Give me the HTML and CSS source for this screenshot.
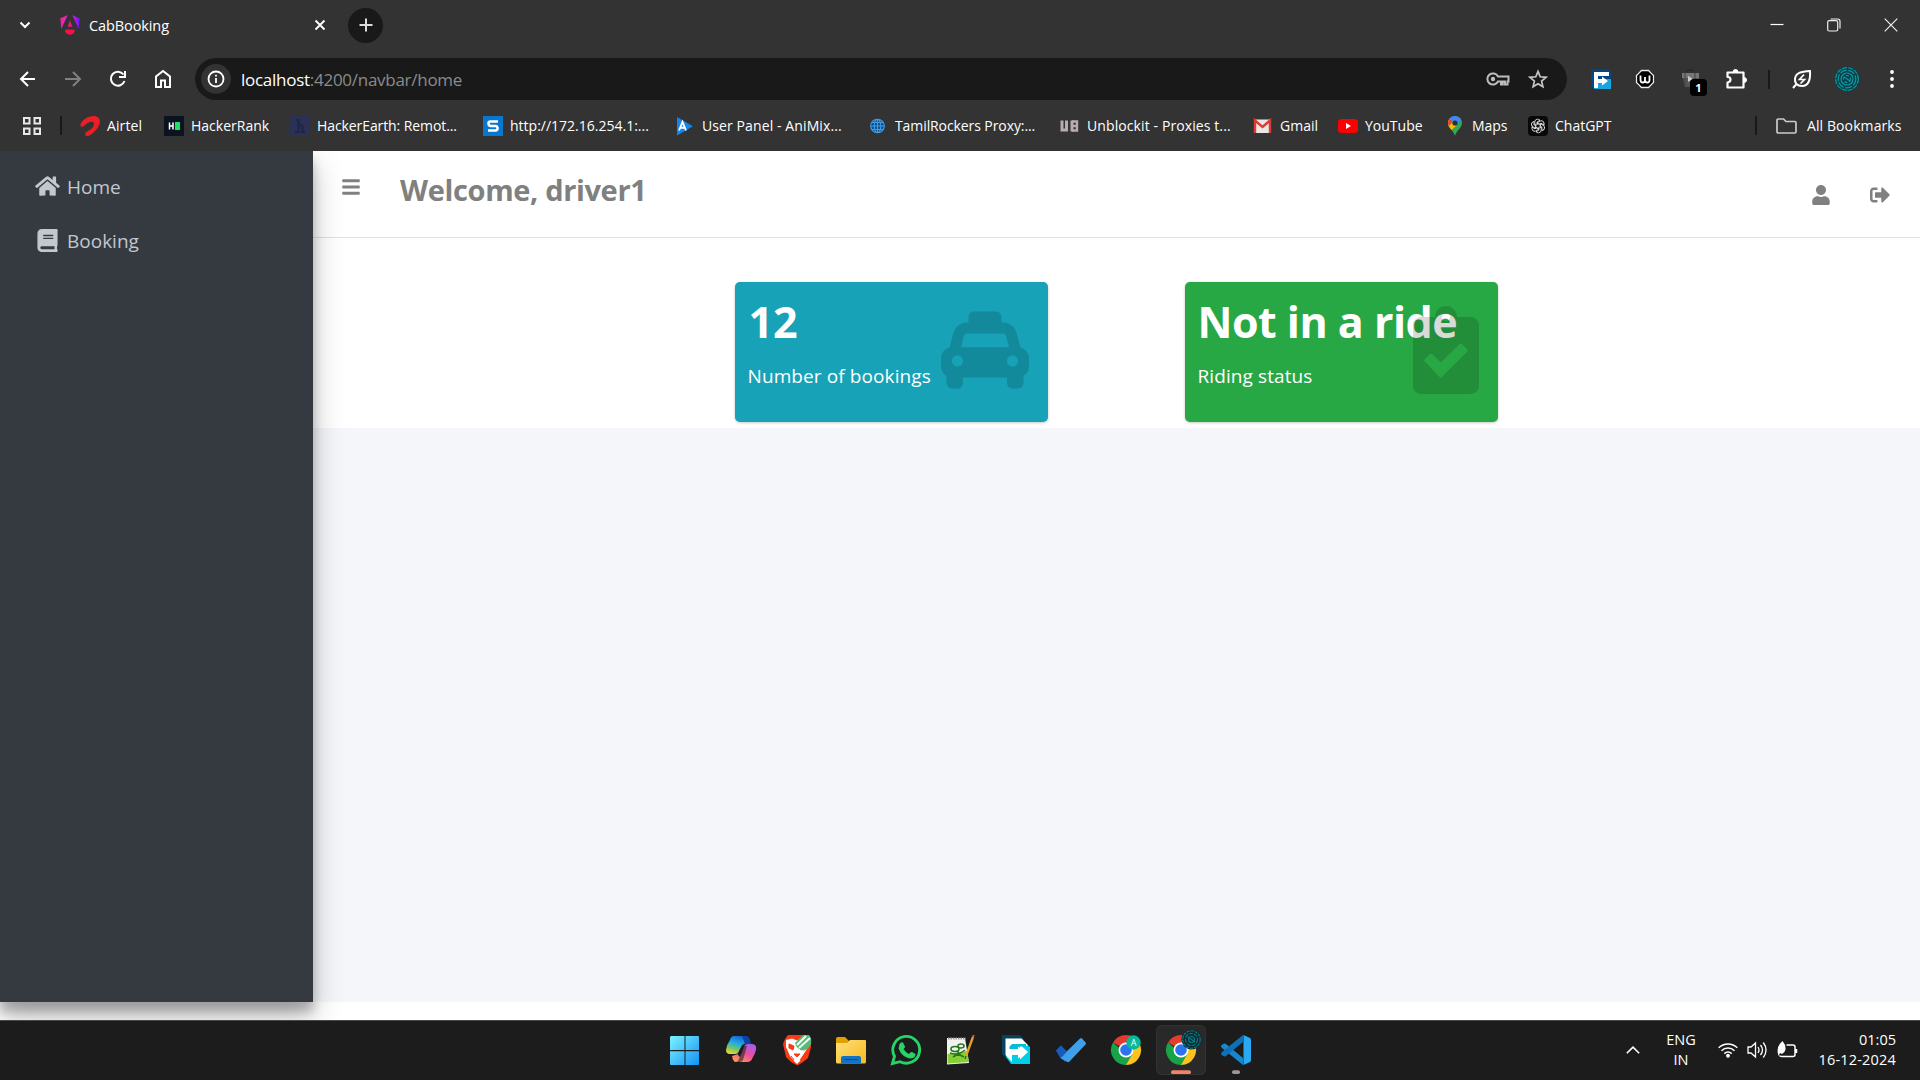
FILE: index.html
```html
<!DOCTYPE html>
<html lang="en">
<head>
<meta charset="utf-8">
<title>CabBooking</title>
<link rel="stylesheet" href="styles.css">
</head>
<body>
<div class="screen">
  <header class="browser">
    <div class="tabstrip">
      <svg class="tab-search" width="12" height="8" viewBox="0 0 12 8"><path d="M1.5 1.5 6 6l4.500-4.500" fill="none" stroke="#fff" stroke-width="2"/></svg>
      <div class="tab">
        <svg width="20" height="20" viewBox="0 0 20 20">
          <defs><linearGradient id="ng" x1="0" y1="0" x2="1" y2="0"><stop offset="0" stop-color="#f0209c"/><stop offset=".5" stop-color="#e02fd8"/><stop offset="1" stop-color="#6a14f5"/></linearGradient></defs>
          <path d="M.3 3.300 7.600.2 1.300 14zM12.400.2l7.300 3.100-1 10.700z" fill="url(#ng)"/>
          <path d="M10 5.200 12.400 11.800H7.600z" fill="#e9187d"/><path d="M5 15.200 6.200 14.500h7.600l1.200 1.500-1.500 2.500-3.500 1.500-3.500-1.500-1.500-2z" fill="#f5104c"/>
        </svg>
        <span class="tab-title">CabBooking</span>
        <svg class="tab-close" width="12" height="12" viewBox="0 0 12 12"><path d="M1.500 1.500l9 9M10.500 1.500l-9 9" stroke="#fff" stroke-width="1.900"/></svg>
      </div>
      <div class="new-tab"><svg width="14" height="14" viewBox="0 0 14 14"><path d="M7 .5v13M.5 7h13" stroke="#ddd" stroke-width="2"/></svg></div>
      <div class="window-controls">
        <svg width="14" height="14" viewBox="0 0 14 14"><path d="M.5 6.500h13" stroke="#fff" stroke-width="1.200"/></svg>
        <svg width="14" height="14" viewBox="0 0 14 14" fill="none" stroke="#eee" stroke-width="1.200"><rect x=".7" y="2.700" width="10" height="10.300" rx="1.500"/><path d="M3.500 1h7.200q2.300 0 2.300 2.300v7.200"/></svg>
        <svg width="14" height="14" viewBox="0 0 14 14"><path d="M.7.7l12.600 12.600M13.300.7L.7 13.300" stroke="#eee" stroke-width="1.200"/></svg>
      </div>
    </div>

    <div class="toolbar">
      <div class="nav-buttons">
        <svg width="20" height="20" viewBox="0 0 20 20" fill="none" stroke="#fff" stroke-width="2"><path d="M17 10H3M10 3 3 10l7 7"/></svg>
        <svg width="20" height="20" viewBox="0 0 20 20" fill="none" stroke="#808080" stroke-width="2"><path d="M2 10h14.500M10 3l7 7-7 7"/></svg>
        <svg width="20" height="20" viewBox="0 0 20 20" fill="none" stroke="#fff" stroke-width="2"><path d="M15.500 5.500A7 7 0 1 0 16.500 12M17 2v6h-6"/></svg>
        <svg width="20" height="20" viewBox="0 0 20 20" fill="none" stroke="#fff" stroke-width="2"><path d="M3 18V7.500l7-5.500 7 5.500V18h-5v-6.500H8V18z"/></svg>
      </div>
      <div class="omnibox">
        <div class="site-info"><svg width="18" height="18" viewBox="0 0 18 18"><circle cx="9" cy="9" r="7.500" fill="none" stroke="#fff" stroke-width="1.800"/><path d="M9 8v5M9 4.800v1.800" stroke="#fff" stroke-width="1.800"/></svg></div>
        <span class="url"><b>localhost</b>:4200/navbar/home</span>
        <svg class="key" width="24" height="16" viewBox="0 0 24 16" fill="none" stroke="#bdbdbd" stroke-width="2"><path d="M12 5.500a5.600 5.600 0 1 0 0 5h3V13.500h1.800V10.500H19v3h2.500v-3h1v-5z"/><circle cx="7" cy="8" r="2.200" fill="#bdbdbd" stroke="none"/></svg>
        <svg width="20" height="20" viewBox="0 0 20 20" fill="none" stroke="#c7c7c7" stroke-width="1.700"><path d="M10 2.400l2.200 5.400 5.800.5-4.400 3.800 1.300 5.700-4.900-3-4.900 3 1.300-5.700L2 8.300l5.800-.5z"/></svg>
      </div>
      <div class="extensions">
        <svg width="20" height="20" viewBox="0 0 20 20"><path d="M0 0h17l3 3v17H3l-3-3z" fill="#06457f"/><path d="M3 10h17v10H3z" fill="#16a5e0"/><path d="M3 3h15v4H7v3h4V7.500l6 4.500-6 4.500V14H7v5H3z" fill="#fff"/></svg>
        <svg class="ext-w" width="20" height="20" viewBox="0 0 20 20"><circle cx="10" cy="10" r="9.500" fill="#000"/><path d="M6.500 1.500h7l5 5v7l-5 5h-7l-5-5v-7z" fill="none" stroke="#eee" stroke-width="1.300"/><path d="M5.500 6.500v4.500q0 2.500 2.200 2.500T10 11V8v3q0 2.500 2.300 2.500t2.200-2.500V6.500" fill="none" stroke="#fff" stroke-width="1.800"/></svg>
        <div class="badged">
          <svg width="20" height="20" viewBox="0 0 20 20"><path d="M6 2.500V1h6v1.500" fill="none" stroke="#222"/><path d="M1 4h17v14H4l-1-4z" fill="#555"/><path d="M1 4h17v5H1z" fill="#777"/><path d="M4 4v14M14 4v14" stroke="#444"/><path d="M7 7l5 3-5 3z" fill="#ccc"/></svg>
          <span class="badge">1</span>
        </div>
        <svg class="ext-puzzle" width="22" height="22" viewBox="0 0 22 22"><path d="M2.500 4.500h16v15h-16v-5q3-.5 3-3t-3-2.500z" fill="none" stroke="#fff" stroke-width="2.200" stroke-linejoin="round"/><path d="M8 4a2.500 2.500 0 0 1 5 0zM19 9.500a2.500 2.500 0 0 1 0 5z" fill="#fff" stroke="#fff"/></svg>
        <i class="divider"></i>
        <svg width="20" height="20" viewBox="0 0 20 20" fill="none" stroke="#fff" stroke-width="2"><path d="M18 2c.5 8-1 15-8 15-5 0-7.500-3-7-7C3.500 4 9 2.500 18 2zM1 19l3.500-4"/><path d="M12 5.500 7.500 10.500h5L8.500 14.500" stroke-width="1.700"/></svg>
        <svg width="26" height="26" viewBox="0 0 26 26" fill="none"><circle cx="13" cy="13" r="12.500" fill="#07424a"/><g stroke="#0d98a3" stroke-width="1.200"><circle cx="13" cy="13" r="11.300" stroke-dasharray="5 1"/><circle cx="13" cy="13" r="8.800" stroke-dasharray="7 1.500"/><circle cx="13" cy="13" r="6"/><circle cx="13" cy="13" r="3.500" stroke-dasharray="3 2"/><path d="M10 11l6 4"/></g></svg>
        <svg class="menu-dots" width="4" height="18" viewBox="0 0 4 18" fill="#fff"><circle cx="2" cy="2" r="1.900"/><circle cx="2" cy="9" r="1.900"/><circle cx="2" cy="16" r="1.900"/></svg>
      </div>
    </div>

    <nav class="bookmarks">
      <div class="mark"><svg width="18" height="18" viewBox="0 0 18 18" fill="none" stroke="#e8e8e8" stroke-width="2"><path d="M1 1h5.500v5.500H1zM11.500 1H17v5.500h-5.500zM1 11.500h5.500V17H1zM11.500 11.500H17V17h-5.500z"/></svg></div>
      <div class="mark"><i class="divider"></i></div>
      <div class="mark"><svg width="20" height="20" viewBox="0 0 20 20"><path d="M.3 9C2 3.500 8 0 13.500 0 19 0 21 4 19.300 8.500 17.500 14 11 19 8.500 20 5 20.500 4 17.500 6.500 16c3-1.500 7.500-4.500 7.500-8 0-3-4-2.800-7-.5C4.500 9.500 1 13 .3 9z" fill="#ee1c25"/></svg><span class="t-airtel">Airtel</span></div>
      <div class="mark"><svg width="20" height="20" viewBox="0 0 20 20"><path d="M0 0h20v20H0z" fill="#0b1220"/><path d="M5.500 6.500v7M9 6.500v7M5.500 10H9" stroke="#fff" stroke-width="1.500"/><path d="M11 6h5v8h-5z" fill="#1ddf66"/></svg><span>HackerRank</span></div>
      <div class="mark"><svg width="20" height="20" viewBox="0 0 20 20"><rect width="20" height="20" rx="2" fill="#2b3154"/><path d="M5.500 4h3v12M12.500 16v-5q0-2.500-4-2M5 16h5M11 16h4" fill="none" stroke="#1e2547" stroke-width="2"/></svg><span class="t-earth">HackerEarth: Remot...</span></div>
      <div class="mark"><svg width="20" height="20" viewBox="0 0 20 20"><path d="M0 0h20v20H0z" fill="#0878cf"/><path d="M15 5.500H7.500q-2 0-2 2T7.500 10h5q2 0 2 2.300t-2 2.200H5" fill="none" stroke="#fff" stroke-width="2.600"/></svg><span>http://172.16.254.1:...</span></div>
      <div class="mark"><svg width="20" height="20" viewBox="0 0 20 20"><path d="M2 1l16 9.300L2 19.500z" fill="#1684e8"/><path d="M4 14.500 7.500 6l3.500 8.500M5.500 11.700h4" fill="none" stroke="#fff" stroke-width="1.900"/></svg><span class="t-panel">User Panel - AniMix...</span></div>
      <div class="mark"><svg width="20" height="20" viewBox="0 0 20 20"><circle cx="9.500" cy="10" r="7.300" fill="#164d7b"/><g fill="none" stroke="#3f9be8" stroke-width="1.100"><circle cx="9.500" cy="10" r="6.800"/><ellipse cx="9.500" cy="10" rx="3.300" ry="6.800"/><path d="M9.500 3v14M2.500 10h14M3.500 6.500h12M3.500 13.500h12"/></g></svg><span class="t-tamil">TamilRockers Proxy:...</span></div>
      <div class="mark"><svg width="20" height="20" viewBox="0 0 20 20"><path d="M2 4.500V14H6.500V4.500M12 4.500V15.500" fill="none" stroke="#b9acac" stroke-width="3"/><path d="M12 5.500h5v9h-5M12 10h5" fill="none" stroke="#b9acac" stroke-width="2.400"/></svg><span class="t-panel">Unblockit - Proxies t...</span></div>
      <div class="mark"><svg width="20" height="20" viewBox="0 0 20 20"><path d="M1 3.500h17v13.500H1z" fill="#e8e8e8"/><path d="M2 17V4.500l7.500 6.500L17 4.500V17" fill="none" stroke="#dc3c32" stroke-width="2.400"/></svg><span>Gmail</span></div>
      <div class="mark"><svg width="20" height="20" viewBox="0 0 20 20"><rect y="3" width="20" height="14" rx="3.500" fill="#f00"/><path d="M8 7l5 3-5 3z" fill="#fff"/></svg><span>YouTube</span></div>
      <div class="mark"><svg width="20" height="20" viewBox="0 0 20 20"><path d="M3 7a7 7 0 0 1 14 0c0 5-5.500 7-7 13-1.500-6-7-8-7-13z" fill="#34a853"/><path d="M3.200 8.500A7 7 0 0 1 4.500 2.600L8 5.500 12 9l-5.500 5C5 12 3.500 10.500 3.200 8.500z" fill="#fbbc04"/><path d="M3.100 8A7 7 0 0 1 4.600 2.600L8 5.500 4 10z" fill="#ea4335"/><path d="M4.600 2.600A7 7 0 0 1 16.500 4.500L11 9 7.500 5.500z" fill="#4285f4"/><circle cx="10" cy="7" r="2.600" fill="#2d3036"/></svg><span class="t-maps">Maps</span></div>
      <div class="mark"><svg width="20" height="20" viewBox="0 0 20 20"><rect width="20" height="20" rx="4" fill="#080808"/><g fill="none" stroke="#ddd" stroke-width=".9"><path id="loop" d="M10 7.200 6.800 9V5.800Q7 3.300 9.500 3.200q1.500 0 2.500 1L9.200 5.900V9"/><use href="#loop" transform="rotate(60 10 10)"/><use href="#loop" transform="rotate(120 10 10)"/><use href="#loop" transform="rotate(180 10 10)"/><use href="#loop" transform="rotate(240 10 10)"/><use href="#loop" transform="rotate(300 10 10)"/></g></svg><span>ChatGPT</span></div>
      <div class="mark"><i class="divider"></i></div>
      <div class="mark folder"><svg width="21" height="16" viewBox="0 0 21 16"><path d="M1 2.200Q1 1 2.200 1H7.500l2.500 2.500h8.800Q20 3.500 20 4.700v9.100q0 1.200-1.200 1.200H2.200Q1 15 1 13.800z" fill="none" stroke="#ccc" stroke-width="1.700"/></svg><span class="t-panel">All Bookmarks</span></div>
    </nav>
  </header>

  <div class="page">
    <aside class="sidebar">
      <a class="side-link"><svg width="25" height="22" viewBox="0 0 576 512"><path d="M280.370 148.260L96 300.110V464a16 16 0 0 0 16 16l112.060-.29a16 16 0 0 0 15.920-16V368a16 16 0 0 1 16-16h64a16 16 0 0 1 16 16v95.640a16 16 0 0 0 16 16.050L464 480a16 16 0 0 0 16-16V300L295.670 148.260a12.190 12.190 0 0 0-15.300 0zM571.600 251.470L488 182.560V44.050a12 12 0 0 0-12-12h-56a12 12 0 0 0-12 12v72.610L318.470 43a48 48 0 0 0-61 0L4.340 251.470a12 12 0 0 0-1.600 16.900l25.500 31A12 12 0 0 0 45.150 301l235.220-193.740a12.190 12.190 0 0 1 15.300 0L530.900 301a12 12 0 0 0 16.900-1.600l25.500-31a12 12 0 0 0-1.700-16.930z"/></svg><span>Home</span></a>
      <a class="side-link"><svg width="25" height="23" viewBox="0 0 448 512"><path d="M448 360V24c0-13.300-10.700-24-24-24H96C43 0 0 43 0 96v320c0 53 43 96 96 96h328c13.300 0 24-10.700 24-24v-16c0-7.500-3.500-14.300-8.900-18.700-4.200-15.400-4.200-59.300 0-74.700 5.400-4.300 8.900-11.100 8.900-18.600zM128 134c0-3.300 2.700-6 6-6h212c3.300 0 6 2.700 6 6v20c0 3.300-2.700 6-6 6H134c-3.300 0-6-2.700-6-6v-20zm0 64c0-3.300 2.700-6 6-6h212c3.300 0 6 2.700 6 6v20c0 3.300-2.700 6-6 6H134c-3.300 0-6-2.700-6-6v-20zm253.400 250H96c-17.700 0-32-14.300-32-32 0-17.600 14.400-32 32-32h285.400c-1.900 17.100-1.900 46.900 0 64z"/></svg><span>Booking</span></a>
    </aside>
    <main class="content">
      <div class="topbar">
        <svg class="burger" width="18" height="20" viewBox="0 0 448 512"><path d="M16 132h416c8.800 0 16-7.200 16-16V76c0-8.800-7.200-16-16-16H16C7.200 60 0 67.200 0 76v40c0 8.800 7.200 16 16 16zm0 160h416c8.800 0 16-7.200 16-16v-40c0-8.800-7.200-16-16-16H16c-8.800 0-16 7.200-16 16v40c0 8.800 7.200 16 16 16zm0 160h416c8.800 0 16-7.200 16-16v-40c0-8.800-7.200-16-16-16H16c-8.800 0-16 7.200-16 16v40c0 8.800 7.200 16 16 16z"/></svg>
        <h1>Welcome, driver1</h1>
        <svg class="user" width="18" height="20" viewBox="0 0 448 512"><path d="M224 256c70.700 0 128-57.300 128-128S294.700 0 224 0 96 57.300 96 128s57.300 128 128 128zm89.600 32h-16.700c-22.200 10.200-46.900 16-72.900 16s-50.600-5.800-72.900-16h-16.700C60.200 288 0 348.200 0 422.400V464c0 26.500 21.500 48 48 48h352c26.500 0 48-21.500 48-48v-41.600c0-74.200-60.200-134.400-134.400-134.400z"/></svg>
        <svg class="logout" width="20" height="20" viewBox="0 0 512 512"><path d="M497 273L329 441c-15 15-41 4.500-41-17v-96H152c-13.300 0-24-10.700-24-24v-96c0-13.300 10.700-24 24-24h136V88c0-21.400 25.900-32 41-17l168 168c9.300 9.400 9.300 24.600 0 34zM192 436v-40c0-6.600-5.400-12-12-12H96c-17.700 0-32-14.300-32-32V160c0-17.700 14.300-32 32-32h84c6.600 0 12-5.400 12-12V76c0-6.600-5.400-12-12-12H96c-53 0-96 43-96 96v192c0 53 43 96 96 96h84c6.600 0 12-5.400 12-12z"/></svg>
      </div>
      <section class="cards">
        <article class="card info">
          <h2 class="t-count">12</h2><p>Number of bookings</p>
          <svg class="card-icon" width="88" height="88" viewBox="0 0 512 512"><path fill-rule="evenodd" d="M462 241.640l-22-84.840c-9.600-35.200-41.600-60.800-76.800-60.800H352V64c0-17.670-14.330-32-32-32H192c-17.670 0-32 14.330-32 32v32h-11.200c-35.200 0-67.200 25.600-76.800 60.800l-22 84.840C21.410 248.040 0 273.470 0 304v48c0 23.630 12.950 44.040 32 55.120V448c0 17.670 14.330 32 32 32h32c17.670 0 32-14.330 32-32v-32h256v32c0 17.670 14.330 32 32 32h32c17.670 0 32-14.330 32-32v-40.880c19.050-11.090 32-31.500 32-55.120v-48c0-30.530-21.410-55.960-50-62.360zM96 352c-17.670 0-32-14.330-32-32s14.330-32 32-32 32 14.330 32 32-14.330 32-32 32zm20.550-112l17.200-66.360c2.230-8.160 9.590-13.640 15.060-13.640h214.400c5.470 0 12.830 5.480 14.850 12.860L395.480 240h-278.900zM416 352c-17.670 0-32-14.330-32-32s14.330-32 32-32 32 14.330 32 32-14.330 32-32 32z"/></svg>
        </article>
        <article class="card success">
          <h2 class="t-ride">Not in a ride</h2><p>Riding status</p>
          <svg class="card-icon" width="66" height="88" viewBox="0 0 384 512"><path fill-rule="evenodd" d="M336 64h-80c0-35.300-28.700-64-64-64s-64 28.700-64 64H48C21.500 64 0 85.500 0 112v352c0 26.500 21.500 48 48 48h288c26.500 0 48-21.500 48-48V112c0-26.500-21.500-48-48-48zM192 40c13.300 0 24 10.700 24 24s-10.700 24-24 24-24-10.700-24-24 10.700-24 24-24zM66 320q-4-4 0-8l31-31q9-7 17 0l47 48 110-107q8-7 15 0l31 32q4 5 0 10L168 413q-7 7-14 0z"/></svg>
        </article>
      </section>
    </main>
  </div>

  <footer class="taskbar">
    <div class="apps">
      <svg viewBox="0 0 50 50"><defs><linearGradient id="win" x1="0" y1="0" x2="1" y2="1"><stop offset="0" stop-color="#7df3ff"/><stop offset="1" stop-color="#1292f5"/></linearGradient></defs><path d="M10 11h13.500v14H9V12zM24.500 11H37q1 0 1 1v13H24.500zM9 26.200h14.500V40H10q-1 0-1-1zM24.500 26.200H38V39q0 1-1 1H24.500z" fill="url(#win)"/></svg>
      <svg viewBox="0 0 50 50"><defs><linearGradient id="cpa" x1=".6" y1="0" x2=".2" y2="1"><stop offset="0" stop-color="#1261d8"/><stop offset=".4" stop-color="#22a9e5"/><stop offset=".7" stop-color="#6dc86a"/><stop offset="1" stop-color="#ffd02e"/></linearGradient><linearGradient id="cpb" x1=".8" y1="0" x2=".2" y2="1"><stop offset="0" stop-color="#a65cf0"/><stop offset=".5" stop-color="#e84f9b"/><stop offset="1" stop-color="#ff9a55"/></linearGradient></defs><path d="M18 11h11q3 0 4 4l1 4h-5q-3 0-4 3l-2 4q-1 3-4 3h-5q-4 0-4-4 1-6 4-10 1-4 4-4z" fill="url(#cpa)"/><path d="M26 11h4q3 0 4 4l1 4h-5q-2 0-2-3z" fill="#0a42a8"/><path d="M32 19h4q5 0 4 6-1 4-3.500 8-1.500 4-5 4H20q-3 0-4-6l6-2q1 5 3 1l3-8q1-3 4-3z" fill="url(#cpb)"/><path d="M28 21h3l-4 14q-1 2-3 2h-4q2 0 3-3z" fill="#1c1c1c" opacity=".55"/></svg>
      <svg viewBox="0 0 50 50"><path d="M17 10h17l6 4v8l-3 11-5 4-5.500 3.500L20 37l-5-5-3-13 2-5z" fill="#fb3a16"/><path d="M15 15l6-1.500 5 2 5-2 6 1.500-1 9-4 6-3 6-3 3-3-3-4-5-4-9z" fill="#fff"/><path d="M18 19l5 2-1 4-4-2zM34 19l-5 2 1 4 4-2zM23 29h6l-3 3zM20 31l3 4M32 31l-3 4" fill="#fb3a16" stroke="#fb3a16"/><path d="M24 18l8-8h6q3 3 2 9-4 8-10 6-5-2-6-7z" fill="#57b97c"/><path d="M26 20l9-9M28 23l11-10" stroke="#eafff0" stroke-width="2"/></svg>
      <svg viewBox="0 0 50 50"><defs><linearGradient id="fold" x1="0" y1="0" x2="1" y2="1"><stop offset="0" stop-color="#ffe07a"/><stop offset="1" stop-color="#f8b91c"/></linearGradient></defs><path d="M10 14q0-2 2-2h7l4 4v7H10z" fill="#e0a000"/><path d="M10 18h11l3-3h15q1 0 1 1v21q0 1.500-1.500 1.500h-27Q10 38.500 10 37z" fill="url(#fold)"/><path d="M15 38.500V33q0-2 2-2h16q2 0 2 2v5.500z" fill="#1472c4"/><path d="M18.500 34.500h13" stroke="#064b8c"/></svg>
      <svg viewBox="0 0 50 50"><path d="M11.500 38.500l2-7.200A13.400 13.400 0 1 1 19 36.700z" fill="none" stroke="#25d366" stroke-width="2.900"/><path d="M18.500 19q1.500-2.500 3.500-1.500l2 4q0 1.500-1.500 2.500 2 3.500 5.500 5 2-2.500 3-2l3.500 2q0 4-4.500 4.500-9-1-12.500-10z" fill="#25d366"/></svg>
      <svg viewBox="0 0 50 50"><path d="M11 13h18l4 25-22 1.500z" fill="#f1f1ee"/><path d="M11.500 29l20-3 1.200 11-21 1.500z" fill="#85cf35"/><path d="M12 13.500h18" stroke="#999" stroke-dasharray="1.500 1" stroke-width="2"/><g fill="none" stroke="#267820" stroke-width="1.600"><ellipse cx="19" cy="24" rx="4" ry="2.500"/><ellipse cx="25" cy="21" rx="3" ry="2"/><path d="M14 28q8 3 15-3M17 32l5-3 6 3M22 26v5"/></g><path d="M37 12l-7 19" stroke="#e7a31c" stroke-width="2.300"/><path d="M30 31l-1 3" stroke="#333"/><path d="M37 12l.7-2" stroke="#d65a5a" stroke-width="2"/></svg>
      <svg viewBox="0 0 50 50"><path d="M11 10h18l4 4v20H16l-5-5z" fill="#06425f"/><path d="M20 18h14l5 4v17H20l-5-7z" fill="#00cde8"/><path d="M14.500 13.500h16l6 6V21H21v3h8v-4.500l8 7.500-8 7.500V30h-8v7l-6.500-7z" fill="#fff"/><path d="M21 19h14v2.500H27V24H18.500v-2.500z" fill="#06bcd8"/><path d="M18.500 25H27v-3.500l8 6-8 6V30h-8.500z" fill="#fff"/></svg>
      <svg viewBox="0 0 50 50"><path d="M10 25.500l5-5 9 9-5 7.500z" fill="#1758bb"/><path d="M14 33l20-19.500q1-1 2 0l4 4.500q0 1-.5 1.500L23.500 36.500q-1.500 1.500-3 0z" fill="#3f9feb"/><path d="M10 25.500l5-5 5.500 6.500-6 6.500z" fill="#185abd"/></svg>
      <svg viewBox="0 0 50 50"><g id="chrome"><path d="M25 25 12 17.500A15 15 0 0 1 38 17.500z" fill="#e33b2e"/><path d="M25 25V17.500h13A15 15 0 0 1 25 40z" fill="#fcc31e"/><path d="M12 17.500A15 15 0 0 0 25 40l6.500-11.300H25z" fill="#18a34a"/><circle cx="25" cy="25" r="7.500" fill="#fff"/><circle cx="25" cy="25" r="5.800" fill="#2a74ef"/></g><circle cx="32.500" cy="17.500" r="7.200" fill="#09b799"/><text x="32.500" y="20.500" text-anchor="middle" class="avatar-letter">A</text></svg>
      <div class="active-app"><svg viewBox="0 0 50 50"><use href="#chrome"/><circle cx="35.500" cy="14.500" r="10" fill="#102b31"/><g fill="none" stroke="#0b7e88" stroke-width="1.100"><circle cx="35.500" cy="14.500" r="8.700" stroke-dasharray="3 1"/><circle cx="35.500" cy="14.500" r="6" stroke-dasharray="4 1"/><circle cx="35.500" cy="14.500" r="3"/><path d="M32 12l7 5"/></g><rect x="15" y="45.300" width="20" height="3.800" rx="1.900" fill="#f3826a"/></svg></div>
      <svg viewBox="0 0 50 50"><path d="M10 20.500l3-2q1-.3 2 .5l17 14v7L11 23q-1-1-1-2.500z" fill="#1787d0"/><path d="M10 29.500l3 2q1 .3 2-.5l17-14v-7L11 27q-1 1-1 2.500z" fill="#0f70b5"/><path d="M32.500 10l6.500 3q1 .6 1 2v20q0 1.400-1 2l-6.500 3z" fill="#2aa9f2"/><rect x="21" y="45.300" width="8" height="3.700" rx="1.800" fill="#999"/></svg>
    </div>
    <div class="tray">
      <svg width="14" height="8" viewBox="0 0 14 8"><path d="M.8 7.200 7 1.200l6.200 6" fill="none" stroke="#fff" stroke-width="1.600"/></svg>
      <div class="lang"><span>ENG</span><span>IN</span></div>
      <svg width="20" height="16" viewBox="0 0 20 16" fill="none" stroke="#fff" stroke-width="1.500"><path d="M.7 5.800a13.200 13.200 0 0 1 18.600 0M3.500 8.800a9.200 9.200 0 0 1 13 0M6.300 11.600a5.300 5.300 0 0 1 7.400 0"/><circle cx="10" cy="13.800" r="1.200" fill="#fff"/></svg>
      <svg width="21" height="18" viewBox="0 0 21 18" fill="none" stroke="#fff" stroke-width="1.300"><path d="M1 6h3l4.500-4v14L4 12H1zM11 6q2 3 0 6M13.500 4q4 5 0 10M16.300 1.500q5.500 7.500 0 15"/></svg>
      <svg width="21" height="18" viewBox="0 0 21 18"><path d="M9.500 4h6.500q2 0 2 2v7.500q0 2-2 2H4.500q-1.500 0-2-1M19.500 8v4" fill="none" stroke="#fff" stroke-width="1.500"/><path d="M5.500 0q3.500 4 3 8.500-.5 3-3.500 4.500l-2-1-1.500 3L.8 12Q-.5 5 5.500 0z" fill="#fff"/></svg>
      <div class="clock"><span>01:05</span><span class="t-date">16-12-2024</span></div>
    </div>
  </footer>
</div>
</body>
</html>
```
FILE: styles.css
```css
* { box-sizing: border-box; }
body { margin: 0; overflow: hidden; font-family: "Open Sans", "Noto Sans", sans-serif; }
svg { display: block; flex: none; }
h1, h2, p { margin: 0; }
.screen { width: 1920px; height: 1080px; display: flex; flex-direction: column; background: #fff; }

.browser { height: 151px; flex: none; background: #333; color: #fff; position: relative; z-index: 3; }
.tabstrip { height: 50px; display: flex; align-items: center; padding: 0 22px 0 19px; }
.tab { display: flex; align-items: center; width: 297px; margin-left: 29px; }
.tab-title { margin: 1px 0 0 9px; font-size: 14.500px; line-height: 20px; letter-spacing: -.1px; }
.tab-close { margin-left: auto; margin-right: 31px; }
.new-tab { width: 35px; height: 35px; margin-left: -9px; border-radius: 50%; background: #191919; display: grid; place-items: center; }
.window-controls { margin-left: auto; display: flex; gap: 43px; }

.toolbar { height: 58px; display: flex; align-items: center; padding: 0 26px 0 18px; }
.nav-buttons { display: flex; gap: 25px; width: 177px; }
.omnibox { width: 1372px; height: 42px; border-radius: 21px; background: #191919; display: flex; align-items: center; padding: 0 19px 0 6px; }
.site-info { width: 30px; height: 30px; border-radius: 50%; background: #333; display: grid; place-items: center; }
.url { margin: 2px 0 0 10px; font-size: 17px; line-height: 24px; color: #8b8b8b; letter-spacing: -.27px; }
.url b { color: #fff; font-weight: 400; }
.key { margin-left: auto; margin-right: 18px; }
.extensions { flex: 1; display: flex; align-items: center; gap: 22px; padding-left: 24px; }
.ext-w { margin: 0 4px 0 2px; }
.ext-puzzle { margin-left: 2px; margin-right: -1px; }
.menu-dots { margin-left: 8px; }
.divider { width: 2px; height: 19px; background: #191919; }
.badged { position: relative; }
.badge { position: absolute; left: 9px; top: 10px; width: 17px; height: 17px; border-radius: 4px; background: #000; font-size: 11px; line-height: 17px; font-weight: 700; text-align: center; }

.bookmarks { height: 35px; display: grid; padding-left: 23px; align-items: center; font-size: 14px; line-height: 20px;
  grid-template-columns: 37px 20px 84px 126px 193px 192px 193px 192px 193px 85px 107px 83px 227px 21px 1fr; }
.mark { display: flex; align-items: center; gap: 7px; white-space: nowrap; }
.folder { gap: 10px; }
.t-airtel { letter-spacing: .1px; }
.t-earth, .t-tamil { letter-spacing: -.09px; }
.t-panel { letter-spacing: .1px; }
.t-maps { letter-spacing: -.1px; }

.page { height: 869px; flex: none; display: flex; align-items: flex-start; overflow: hidden; }
.sidebar { width: 313px; height: 851px; flex: none; background: #353a41; padding-top: 8px; position: relative; z-index: 2;
  box-shadow: 0 14px 28px rgba(0,0,0,.25), 0 10px 10px rgba(0,0,0,.22); }
.side-link { height: 54px; display: flex; align-items: center; padding-left: 35px; gap: 7px; color: #c2c7d0; font-size: 19px; line-height: 28px; }
.side-link span { margin-top: 2px; }
.side-link svg, .topbar svg { fill: currentColor; }
.content { flex: 1; height: 851px; background: #f4f6f9; }
.topbar { height: 87px; background: #fff; border-bottom: 1px solid #dee2e6; display: flex; align-items: center; color: #808080; padding: 0 30px 0 29px; }
.burger { margin-bottom: 15px; }
.topbar h1 { margin: -8px auto 0 40px; font-size: 29px; line-height: 40px; font-weight: 700; letter-spacing: -.35px; }
.user, .logout { margin-top: 1px; }
.logout { margin-left: 40px; }
.cards { height: 190px; background: #fff; display: flex; justify-content: center; gap: 137px; padding-top: 44px; }
.card { width: 313px; height: 140px; border-radius: 5px; padding: 12.500px; color: #fff; position: relative; white-space: nowrap;
  box-shadow: 0 0 1px rgba(0,0,0,.125), 0 1px 3px rgba(0,0,0,.2); }
.info { background: #17a2b8; }
.success { background: #28a745; }
.card h2 { font-size: 43px; line-height: 53px; font-weight: 700; }
.t-count { padding-left: 1px; }
.t-ride { letter-spacing: -.52px; }
.card p { margin-top: 13px; font-size: 19px; line-height: 30px; letter-spacing: .1px; }
.card-icon { position: absolute; right: 19px; top: 24px; fill: rgba(0,0,0,.15); }

.taskbar { height: 60px; flex: none; background: #1c1c1c; border-top: 1px solid #484848; display: flex; justify-content: space-between; padding: 4px 24px 0 661px; color: #fff; }
.apps { display: flex; gap: 5px; }
.apps svg { width: 50px; height: 50px; }
.active-app { height: 50px; border-radius: 6px; background: #292929; box-shadow: inset 0 0 0 1px #323232; }
.avatar-letter { font-size: 9px; fill: #fff; }
.tray { display: flex; align-items: center; height: 50px; font-size: 14.500px; line-height: 20px; }
.lang { width: 40px; margin: 0 17px 0 21px; text-align: center; }
.lang span, .clock span { display: block; }
.tray svg + svg { margin-left: 9px; }
.clock { width: 98px; text-align: right; }
.t-date { letter-spacing: .18px; }
```
